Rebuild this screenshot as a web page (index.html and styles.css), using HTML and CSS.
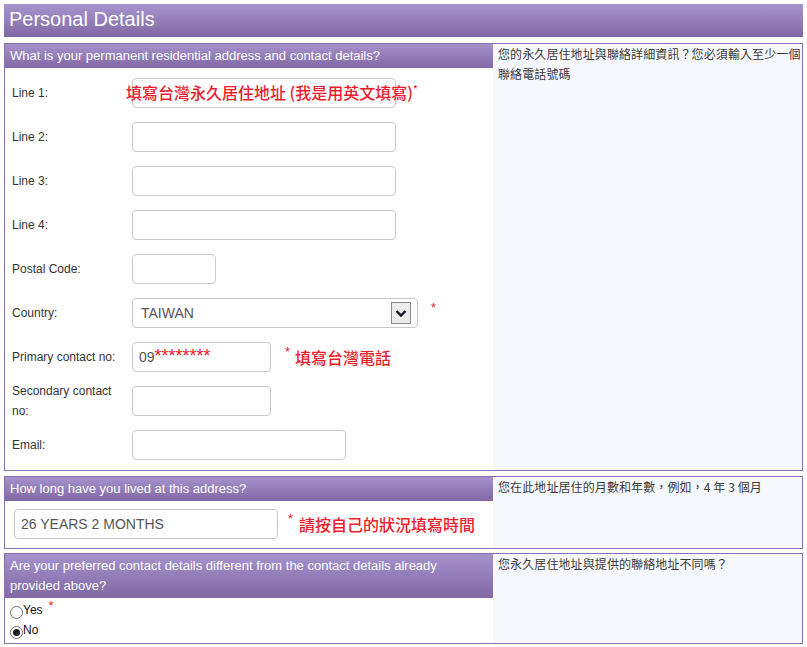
FILE: index.html
```html
<!DOCTYPE html>
<html lang="zh-Hant">
<head>
<meta charset="utf-8">
<title>Personal Details</title>
<link rel="stylesheet" href="styles.css">
</head>
<body>
<div class="page-title">Personal Details</div>

<div class="section s1">
  <div class="main">
    <div class="q">What is your permanent residential address and contact details?</div>
    <div class="form">
      <div class="row">
        <div class="lbl">Line 1:</div>
        <div class="field">
          <div class="input w264"></div>
          <span class="overlay">填寫台灣永久居住地址 (我是用英文填寫)<sup class="tiny">*</sup></span>
        </div>
      </div>
      <div class="row"><div class="lbl">Line 2:</div><div class="field"><div class="input w264"></div></div></div>
      <div class="row"><div class="lbl">Line 3:</div><div class="field"><div class="input w264"></div></div></div>
      <div class="row"><div class="lbl">Line 4:</div><div class="field"><div class="input w264"></div></div></div>
      <div class="row"><div class="lbl">Postal Code:</div><div class="field"><div class="input w84"></div></div></div>
      <div class="row">
        <div class="lbl">Country:</div>
        <div class="field">
          <div class="select">
            <span class="val">TAIWAN</span>
            <span class="arrow"><svg width="18" height="20" viewBox="0 0 18 20"><path d="M4.5 8 L9 12.5 L13.5 8" fill="none" stroke="#151a2a" stroke-width="2.4"/></svg></span>
          </div>
          <span class="req r13">*</span>
        </div>
      </div>
      <div class="row">
        <div class="lbl">Primary contact no:</div>
        <div class="field">
          <div class="input w139"><span class="val">09</span><span class="stars">********</span></div>
          <span class="req r14">*</span><span class="note">填寫台灣電話</span>
        </div>
      </div>
      <div class="row"><div class="lbl two">Secondary contact no:</div><div class="field"><div class="input w139"></div></div></div>
      <div class="row"><div class="lbl">Email:</div><div class="field"><div class="input w214"></div></div></div>
    </div>
  </div>
  <div class="help">您的永久居住地址與聯絡詳細資訊？您必須輸入至少一個<br>聯絡電話號碼</div>
</div>

<div class="section s2">
  <div class="main">
    <div class="q">How long have you lived at this address?</div>
    <div class="single">
      <div class="input w264"><span class="val">26 YEARS 2 MONTHS</span></div>
      <span class="req r10">*</span><span class="note n2">請按自己的狀況填寫時間</span>
    </div>
  </div>
  <div class="help">您在此地址居住的月數和年數，例如，4 年 3 個月</div>
</div>

<div class="section s3">
  <div class="main">
    <div class="q q2">Are your preferred contact details different from the contact details already provided above?</div>
    <div class="radios">
      <div class="opt"><span class="radio"></span>Yes<span class="req r5">*</span></div>
      <div class="opt"><span class="radio on"></span>No</div>
    </div>
  </div>
  <div class="help">您永久居住地址與提供的聯絡地址不同嗎？</div>
</div>
</body>
</html>
```

FILE: styles.css
```css
* { box-sizing: border-box; }
body {
  margin: 4px;
  background: #fff;
  font-family: "Liberation Sans", Arial, "Noto Sans CJK TC", sans-serif;
  color: #333;
}
.page-title {
  height: 33px;
  line-height: 31px;
  padding-left: 5px;
  font-size: 20px;
  color: #fff;
  background: linear-gradient(#a795cf, #8167a3);
}
.section {
  display: flex;
  border: 1px solid #8a70ae;
}
.s1 { margin-top: 6px; }
.s2 { margin-top: 5px; }
.s3 { margin-top: 4px; }
.main { width: 488px; flex: none; background: #fff; }
.help {
  flex: 1;
  min-width: 0;
  background: #f7f8fd;
  padding: 0 0 0 5px;
  font-family: "Noto Sans CJK TC", sans-serif;
  font-size: 12px;
  line-height: 20px;
  letter-spacing: 0.1px;
  white-space: nowrap;
  color: #3a3a3a;
}
.q {
  height: 24px;
  line-height: 24px;
  padding-left: 5px;
  font-size: 13px;
  color: #fff;
  background: linear-gradient(#a592cd, #8268a4);
}
.q2 {
  height: 44px;
  line-height: 20px;
  padding: 2px 10px 2px 5px;
}
.form {
  display: flex;
  flex-direction: column;
  gap: 14px;
  padding: 10px 0 10px 7px;
}
.row {
  display: flex;
  align-items: center;
  height: 30px;
}
.lbl {
  width: 120px;
  flex: none;
  font-size: 12px;
  line-height: 20px;
  color: #333;
}
.lbl.two { padding-right: 14px; }
.field {
  position: relative;
  display: flex;
  align-items: center;
}
.input {
  height: 30px;
  border: 1px solid #c9c9c9;
  border-radius: 4px;
  background: #fff;
  padding-left: 6px;
  display: flex;
  align-items: center;
  font-size: 14px;
  color: #555;
}
.w264 { width: 264px; }
.w84 { width: 84px; }
.w139 { width: 139px; }
.w214 { width: 214px; }
.stars {
  color: #f0162e;
  font-size: 18px;
  line-height: 1;
  position: relative;
  top: -1px;
}
.select {
  width: 286px;
  height: 30px;
  border: 1px solid #c9c9c9;
  border-radius: 4px;
  background: #fff;
  display: flex;
  align-items: center;
  justify-content: space-between;
  padding: 0 6px 0 8px;
  font-size: 14px;
  color: #555;
}
.arrow {
  width: 20px;
  height: 22px;
  border: 1px solid #8a8a8a;
  background: #ececec;
  display: flex;
  align-items: center;
  justify-content: center;
}
.req {
  color: #f3162c;
  font-size: 13px;
  align-self: flex-start;
  margin-top: 2px;
}
.r13 { margin-left: 13px; }
.r14 { margin-left: 14px; }
.r10 { margin-left: 10px; }
.r5 { margin-left: 6px; align-self: auto; margin-top: 0; position: relative; top: -4px; }
.note {
  margin-left: 5px;
  font-family: "Noto Sans CJK TC", sans-serif;
  font-size: 16px;
  font-weight: 500;
  color: #ee1c2c;
  line-height: 20px;
}
.n2 { margin-left: 6px; }
.overlay {
  position: absolute;
  left: -6px;
  top: 4px;
  font-family: "Noto Sans CJK TC", sans-serif;
  font-size: 16px;
  font-weight: 500;
  line-height: 20px;
  color: #ee1c2c;
  white-space: nowrap;
}
.tiny { font-size: 10px; vertical-align: 6px; line-height: 0; }
.single {
  display: flex;
  align-items: center;
  padding: 8px 0 9px 9px;
}
.radios {
  padding: 2px 0 3px 5px;
  font-size: 12px;
  color: #111;
}
.opt { height: 20px; line-height: 20px; }
.radio {
  display: inline-block;
  width: 13px;
  height: 13px;
  border: 1px solid #6f6f6f;
  border-radius: 50%;
  background: #fff;
  vertical-align: -5px;
  position: relative;
}
.radio.on::after {
  content: "";
  position: absolute;
  left: 2px;
  top: 2px;
  width: 7px;
  height: 7px;
  border-radius: 50%;
  background: #1a1a1a;
}
```
